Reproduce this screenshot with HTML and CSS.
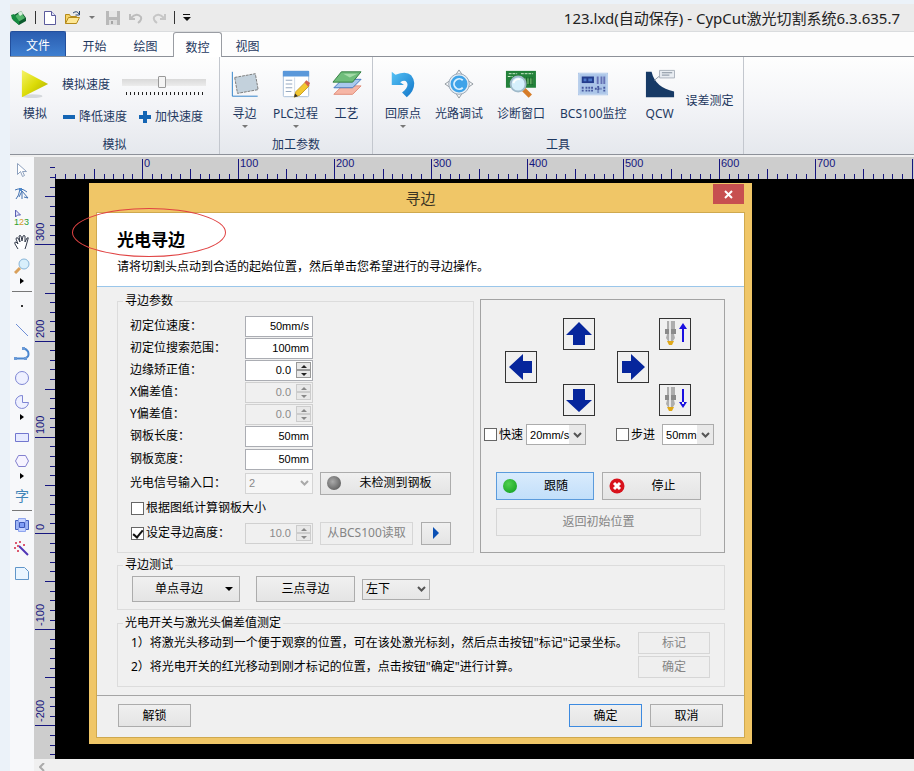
FILE: index.html
```html
<!DOCTYPE html>
<html lang="zh-CN">
<head>
    <meta charset="UTF-8">
    <meta name="viewport" content="width=device-width, initial-scale=1.0">
    <title>CypCut激光切割系统</title>
    <link rel="stylesheet" href="styles.css">
</head>
<body>
    <header class="titlebar">
        <div class="quick">
            <svg width="18" height="18" viewBox="0 0 18 18"><path d="M4 6l7-4 5 7v3l-7 4-6-5z" fill="#0c5a2c"/><path d="M5 7l6-4 4 6-7 4z" fill="#52b56a"/><path d="M1 6l3-1 5 7v4l-7-6z" fill="#168a3e"/><path d="M8 4l3-2 2 3-3 2z" fill="#d8efdc"/></svg>
            <span class="bar"></span>
            <button class="quick-btn" aria-label="新建"><svg width="14" height="16" viewBox="0 0 14 16"><path d="M1.500 1.500h7l4 4v9h-11z" fill="#fff" stroke="#5a5a9c"/><path d="M8.500 1.500v4h4" fill="#dfe3f5" stroke="#5a5a9c"/></svg></button>
            <button class="quick-btn" aria-label="打开"><svg width="18" height="16" viewBox="0 0 18 16"><path d="M1.500 13.500v-9h4l1 2h6v3" fill="#f6d467" stroke="#b58a1a"/><path d="M1.500 13.500l3-6h11l-3 6z" fill="#fde795" stroke="#b58a1a"/><path d="M9 3q4-3 6 1M15.500 1v4h-4" fill="none" stroke="#26456f"/></svg></button>
            <span class="caret gray"></span>
            <button class="quick-btn save" aria-label="保存"><svg width="16" height="16" viewBox="0 0 16 16"><path d="M1 1h14v14h-14z" fill="#b9b9b9"/><path d="M4 1h8v6h-8z" fill="#e6e6e6"/><path d="M4 10h8v5h-8z" fill="#dcdcdc"/><path d="M6 11h2v3h-2z" fill="#a5a5a5"/></svg></button>
            <button class="quick-btn" aria-label="撤销"><svg width="16" height="14" viewBox="0 0 16 14"><path d="M2 3v5h5M3 7q6-6 10-1 1 3-3 6" fill="none" stroke="#bdbdbd" stroke-width="2"/></svg></button>
            <button class="quick-btn" aria-label="重做"><svg width="16" height="14" viewBox="0 0 16 14"><path d="M14 3v5h-5M13 7q-6-6-10-1-1 3 3 6" fill="none" stroke="#c6c6c6" stroke-width="2"/></svg></button>
            <span class="bar"></span>
            <svg width="10" height="10" viewBox="0 0 10 10"><path d="M1 1.500h7" stroke="#111"/><path d="M1 4h8l-4 4z" fill="#111"/></svg>
        </div>
        <h1>123.lxd(自动保存) - CypCut激光切割系统6.3.635.7</h1>
    </header>

    <nav class="tabs">
        <a href="#" class="tab file">文件</a>
        <a href="#" class="tab">开始</a>
        <a href="#" class="tab">绘图</a>
        <a href="#" class="tab active">数控</a>
        <a href="#" class="tab">视图</a>
    </nav>

    <div class="ribbon">
        <section class="group sim">
            <div class="tools">
                <button class="tool play">
                    <svg viewBox="0 0 32 32"><defs><linearGradient id="playFill" x1="0" y1="0" x2="1" y2="1"><stop offset="0" stop-color="#f6f36a"/><stop offset=".5" stop-color="#dcdc08"/><stop offset="1" stop-color="#a8a800"/></linearGradient></defs><ellipse cx="13" cy="29" rx="11" ry="2" fill="#d5d8dc"/><path d="M2 1l28 15-28 14z" fill="url(#playFill)"/></svg>
                    <span>模拟</span>
                </button>
                <div class="speed">
                    <label class="speed-label" for="speed">模拟速度</label>
                    <div class="slider">
                        <input type="range" id="speed" min="0" max="100" value="47">
                        <div class="ticks"></div>
                    </div>
                    <button class="step"><svg width="14" height="14" viewBox="0 0 14 14"><path d="M1 5h12v4h-12z" fill="#1465b4"/></svg>降低速度</button>
                    <button class="step"><svg width="14" height="14" viewBox="0 0 14 14"><path d="M5 1h4v4h4v4h-4v4h-4v-4h-4v-4h4z" fill="#1465b4"/></svg>加快速度</button>
                </div>
            </div>
            <h2>模拟</h2>
        </section>
        <section class="group params">
            <div class="tools">
                <button class="tool">
                    <svg viewBox="0 0 32 32"><path d="M2.500 3v26h27" fill="none" stroke="#2a7ec8"/><path d="M5 9l22-4 3 17-22 4z" fill="#c3d1dc" stroke="#777" stroke-dasharray="3 1"/></svg>
                    <span>寻边</span><i class="caret gray"></i>
                </button>
                <button class="tool">
                    <svg viewBox="0 0 32 32"><rect x="2.500" y="2.500" width="27" height="27" rx="1" fill="#fff" stroke="#a6bdd8"/><path d="M2 2h28v6h-28z" fill="#5a98da"/><path d="M5 12h7M5 16h7M5 20h7M5 24h6" stroke="#8fa3bd"/><path d="M14.500 9v20" stroke="#cfdae8"/><path d="M14 30l2-6 10-10 4 4-10 10z" fill="#f2c830" stroke="#c79a20"/><path d="M25 14l2-2 4 3-2 4z" fill="#d2614d"/><path d="M14 30l1-4 3 3z" fill="#333"/></svg>
                    <span>PLC过程</span><i class="caret gray"></i>
                </button>
                <button class="tool">
                    <svg viewBox="0 0 32 32"><path d="M11 18h20l-9 9h-20z" fill="#f6b6a6" stroke="#e08a76"/><path d="M11 11h20l-9 9h-20z" fill="#a9c9ee" stroke="#3f74bd"/><path d="M10 3h21l-9 11h-21z" fill="#6fbd7b" stroke="#2f7c3d"/><path d="M12 5h15l-8 4z" fill="#a5dba9"/></svg>
                    <span>工艺</span>
                </button>
            </div>
            <h2>加工参数</h2>
        </section>
        <section class="group utils">
            <div class="tools">
                <button class="tool">
                    <svg viewBox="0 0 32 32"><defs><linearGradient id="backFill" x1="0" y1="0" x2="1" y2="1"><stop offset="0" stop-color="#56c2f5"/><stop offset="1" stop-color="#1276c9"/></linearGradient></defs><path d="M4 3l4 3q18-7 20 9 0 9-8 15l-5-5q8-6 5-11-2-3-7 0l4 3h-13z" fill="url(#backFill)"/></svg>
                    <span>回原点</span><i class="caret gray"></i>
                </button>
                <button class="tool">
                    <svg viewBox="0 0 32 32"><path d="M16 1l4 6 5 5 6 4-6 4-5 5-4 6-4-6-5-5-6-4 6-4 5-5z" fill="#f5f6f8" stroke="#8f979f"/><circle cx="16" cy="16" r="11" fill="#e5edf4" stroke="#9aa8b5"/><circle cx="16" cy="16" r="9" fill="#3fa3e8"/><path d="M20 12a5.500 5.500 0 1 0 0 8" fill="none" stroke="#d8f0ff" stroke-width="2"/></svg>
                    <span>光路调试</span>
                </button>
                <button class="tool">
                    <svg viewBox="0 0 34 32"><path d="M1 2h32v18h-32z" fill="#23813a"/><path d="M4 5h9M17 5h13M3 8h5" stroke="#d9f2d5" stroke-dasharray="3 1"/><path d="M18 10h12v6h-12z" fill="#5da95f"/><path d="M20 9v8M23 9v8M26 9v8M29 9v8" stroke="#185e29"/><path d="M20 22l7 7" stroke="#d67c28" stroke-width="5"/><circle cx="14" cy="16" r="8" fill="#d5effc" stroke="#9fb9c9" stroke-width="2"/><path d="M9 15q2-5 7-4" fill="none" stroke="#fff" stroke-width="2"/></svg>
                    <span>诊断窗口</span>
                </button>
                <button class="tool">
                    <svg viewBox="0 0 32 32"><path d="M0 4h32v24h-32z" fill="#abc5e8"/><path d="M1 5h30v22h-30z" fill="none" stroke="#c9daf0"/><path d="M4 8h13v7h-13z" fill="#233c8c"/><path d="M6 10h3v3h-3zM11 10h4v3h-4z" fill="#4d78c8"/><path d="M21 8v8M25 8v8M28 8v8" stroke="#6672b5" stroke-width="2"/><path d="M5 19v5M9 19v5M12 19v5M15 19v5M18 21h7M21.500 18v7M28 19v5" stroke="#46589e" stroke-width="2" stroke-dasharray="2 1"/></svg>
                    <span>BCS100监控</span>
                </button>
                <button class="tool">
                    <svg viewBox="0 0 32 32"><path d="M1 3h6q4 17 24 21v6h-30z" fill="#173a66"/><path d="M10 12l6-5" stroke="#8b96a5"/><path d="M15.500 1.500h16v8h-16z" fill="#e9edf2" stroke="#a9b0ba"/><path d="M18 4h11M18 6.500h8" stroke="#7c8796"/></svg>
                    <span>QCW</span>
                </button>
                <button class="tool plain">误差测定</button>
            </div>
            <h2>工具</h2>
        </section>
    </div>

    <main class="workspace">
        <aside class="toolbox">
            <button aria-label="选择"><svg viewBox="0 0 16 16"><path d="M3.500 1.500v11l3-3 2 5 2-1-2-4h4z" fill="#fff" stroke="#8ea1be"/></svg></button>
            <button aria-label="编辑节点"><svg viewBox="0 0 16 16"><path d="M1 4q6-3 12 2M6 3q-1 7-4 10M8 5v8M8 5l6 7-4-1M8 5l-3 6" fill="none" stroke="#4472b0"/><path d="M5 2h3v3h-3z" fill="#4d88cc"/></svg></button>
            <button aria-label="次序"><svg viewBox="0 0 16 16"><path d="M1.500 0v7l2-2h3z" fill="#e3e3fa" stroke="#5a5fb4"/><text x="0" y="15" font-size="9" class="order"><tspan fill="#2ca02c">1</tspan><tspan fill="#d99a2b">2</tspan><tspan fill="#2ca02c">3</tspan></text></svg></button>
            <button aria-label="移动视图"><svg viewBox="0 0 16 16"><path d="M4 15l-3-5q-1-2 1-2l2 2-2-5q0-2 2-1l2 4-1-6q1-1 2 0l1 5 1-5q1-1 2 0v6l2-4q2-1 1 1l-2 7-1 3" fill="#fff" stroke="#333a4a"/></svg></button>
            <button aria-label="缩放"><svg viewBox="0 0 16 16"><path d="M6 10l-5 5" stroke="#d9a05a" stroke-width="3"/><circle cx="10" cy="6" r="5" fill="#d8effb" stroke="#87b5d8"/></svg></button>
            <i class="more"></i>
            <hr>
            <button aria-label="点"><svg viewBox="0 0 16 16"><path d="M7 7h2v2h-2z" fill="#333"/></svg></button>
            <button aria-label="直线"><svg viewBox="0 0 16 16"><path d="M2 2l12 12" stroke="#6f8fd6"/></svg></button>
            <button aria-label="多段线"><svg viewBox="0 0 16 16"><path d="M2 12.500h8q6-1 4-7-2-3-5-3" fill="none" stroke="#4a86cf" stroke-width="2"/><path d="M0 11h3v3h-3zM10 11h3v3h-3zM8 1h3v3h-3z" fill="#6b9ad6"/></svg></button>
            <button aria-label="圆"><svg viewBox="0 0 16 16"><circle cx="8" cy="8" r="6.500" fill="#eef0ff" stroke="#7f86d4"/></svg></button>
            <button aria-label="圆弧"><svg viewBox="0 0 16 16"><path d="M8.500 1.500a6.500 6.500 0 1 0 6 7h-6z" fill="#eef0ff" stroke="#7f86d4"/></svg></button>
            <i class="more"></i>
            <button aria-label="矩形"><svg viewBox="0 0 16 16"><path d="M1.500 4.500h13v8h-13z" fill="#e6eaff" stroke="#7277cf"/></svg></button>
            <button aria-label="多边形"><svg viewBox="0 0 16 16"><path d="M4.500 2.500h7l3 5.500-3 5.500h-7l-3-5.500z" fill="#f6f3ff" stroke="#8380cf"/></svg></button>
            <i class="more"></i>
            <button class="glyph">字</button>
            <hr>
            <button aria-label="组合"><svg viewBox="0 0 16 16"><path d="M1.500 3.500h13v9h-13z" fill="#9db4f5" stroke="#4762bd"/><path d="M4.500 1.500h7v13h-7z" fill="#c4d2ff" stroke="#8fa5ee"/><path d="M5.500 5.500h5v5h-5z" fill="#7f9df5" stroke="#3c57b8"/></svg></button>
            <button aria-label="优化"><svg viewBox="0 0 16 16"><path d="M5 5l9 9" stroke="#4f35b5" stroke-width="2"/><path d="M1 1h2v2h-2zM5 0h2v2h-2zM9 3h2v2h-2zM0 6h2v2h-2zM3 9h2v2h-2zM3 4h2v2h-2z" fill="#dc5a70"/></svg></button>
            <button aria-label="倒角"><svg viewBox="0 0 16 16"><path d="M1.500 2.500h9l4 4v8h-13z" fill="#eaf5ff" stroke="#6196c9"/></svg></button>
        </aside>
        <svg class="ruler-v" id="rulerV" aria-hidden="true"></svg>
        <svg class="ruler-h" id="rulerH" aria-hidden="true"></svg>

        <div class="canvas">
            <div class="dialog" role="dialog" aria-label="寻边">
                <div class="dialog-title">
                    <span>寻边</span>
                    <button class="close" aria-label="关闭"><svg width="9" height="9" viewBox="0 0 9 9"><path d="M1 1l7 7M8 1l-7 7" stroke="#fff" stroke-width="2"/></svg></button>
                </div>
                <div class="dialog-inner">
                    <div class="intro">
                        <h3>光电寻边</h3>
                        <p>请将切割头点动到合适的起始位置，然后单击您希望进行的寻边操作。</p>
                    </div>

                    <div class="content">
                        <div class="columns">
                            <fieldset class="edge-params">
                                <legend>寻边参数</legend>
                                <div class="form">
                                    <label for="posSpeed">初定位速度：</label>
                                    <input type="text" id="posSpeed" class="box" value="50mm/s">
                                    <label for="searchRange">初定位搜索范围：</label>
                                    <input type="text" id="searchRange" class="box" value="100mm">
                                    <label for="edgeFix">边缘矫正值：</label>
                                    <span class="spin"><input type="text" id="edgeFix" value="0.0"><span class="arrows"><button aria-label="增加"></button><button aria-label="减少"></button></span></span>
                                    <label for="offX">X偏差值：</label>
                                    <span class="spin off"><input type="text" id="offX" value="0.0" disabled><span class="arrows"><button aria-label="增加" disabled></button><button aria-label="减少" disabled></button></span></span>
                                    <label for="offY">Y偏差值：</label>
                                    <span class="spin off"><input type="text" id="offY" value="0.0" disabled><span class="arrows"><button aria-label="增加" disabled></button><button aria-label="减少" disabled></button></span></span>
                                    <label for="plateL">钢板长度：</label>
                                    <input type="text" id="plateL" class="box" value="50mm">
                                    <label for="plateW">钢板宽度：</label>
                                    <input type="text" id="plateW" class="box" value="50mm">
                                    <label for="port">光电信号输入口：</label>
                                    <span class="combo off"><select id="port" disabled><option>2</option></select><svg width="9" height="6" viewBox="0 0 9 6"><path d="M1 1l3.500 3.500 3.500-3.500"/></svg></span>
                                    <button class="btn detect"><i class="led gray"></i><span>未检测到钢板</span></button>
                                    <label class="check wide"><input type="checkbox">根据图纸计算钢板大小</label>
                                    <label class="check"><input type="checkbox" id="useHeight" checked>设定寻边高度：</label>
                                    <span class="spin off"><input type="text" aria-label="寻边高度" value="10.0" disabled><span class="arrows"><button aria-label="增加" disabled></button><button aria-label="减少" disabled></button></span></span>
                                    <span class="read">
                                        <button class="btn" disabled>从BCS100读取</button>
                                        <button class="btn go" aria-label="执行"><svg width="8" height="12" viewBox="0 0 8 12"><path d="M1 0l6 6-6 6z" fill="#0b50b4"/></svg></button>
                                    </span>
                                </div>
                            </fieldset>

                            <div class="jog">
                                <div class="pad">
                                    <button class="pad-btn up" aria-label="上"><svg viewBox="0 0 30 30"><path d="M15 3l13 13h-7v10h-12v-10h-7z"/></svg></button>
                                    <button class="pad-btn left" aria-label="左"><svg viewBox="0 0 30 30"><path d="M3 15l14-13v7h9v12h-9v7z"/></svg></button>
                                    <button class="pad-btn right" aria-label="右"><svg viewBox="0 0 30 30"><path d="M27 15l-14-13v7h-9v12h9v7z"/></svg></button>
                                    <button class="pad-btn down" aria-label="下"><svg viewBox="0 0 30 30"><path d="M15 27l13-12h-7v-11h-12v11h-7z"/></svg></button>
                                    <button class="pad-btn head-up" aria-label="切割头上升"><svg viewBox="0 0 30 30"><path d="M7 2h8v8h-8z" class="metal"/><path d="M5 10h11v5h-11z" class="metal dark"/><path d="M7 15h7l1 4-2 3h-5l-2-3z" class="metal"/><path d="M9 2h2v20h-2z" class="shine"/><path d="M7 22h7l-2 4h-3z" class="tip"/><path d="M22 8h2v15h-2zM23 4l4 6h-8z" class="thin"/></svg></button>
                                    <button class="pad-btn head-down" aria-label="切割头下降"><svg viewBox="0 0 30 30"><path d="M7 2h8v8h-8z" class="metal"/><path d="M5 10h11v5h-11z" class="metal dark"/><path d="M7 15h7l1 4-2 3h-5l-2-3z" class="metal"/><path d="M9 2h2v20h-2z" class="shine"/><path d="M7 22h7l-2 4h-3z" class="tip"/><path d="M22 4h2v15h-2zM23 23l4-6h-8z" class="thin"/></svg></button>
                                </div>
                                <div class="jog-opts">
                                    <label class="check"><input type="checkbox">快速</label>
                                    <span class="combo fast"><select aria-label="快速速度"><option>20mm/s</option></select><svg width="9" height="6" viewBox="0 0 9 6"><path d="M1 1l3.500 3.500 3.500-3.500"/></svg></span>
                                    <label class="check step-check"><input type="checkbox">步进</label>
                                    <span class="combo"><select aria-label="步进距离"><option>50mm</option></select><svg width="9" height="6" viewBox="0 0 9 6"><path d="M1 1l3.500 3.500 3.500-3.500"/></svg></span>
                                </div>
                                <div class="jog-actions">
                                    <button class="btn follow"><i class="led green"></i><span>跟随</span></button>
                                    <button class="btn"><svg width="16" height="16" viewBox="0 0 16 16"><circle cx="8" cy="8" r="7.500" fill="#d8121c"/><path d="M5 5l6 6M11 5l-6 6" stroke="#fff" stroke-width="3"/></svg><span>停止</span></button>
                                    <button class="btn home" disabled>返回初始位置</button>
                                </div>
                            </div>
                        </div>

                        <fieldset class="edge-test">
                            <legend>寻边测试</legend>
                            <div class="test-row">
                                <button class="btn single"><span>单点寻边</span><i class="caret"></i></button>
                                <button class="btn triple">三点寻边</button>
                                <span class="combo corner"><select aria-label="角位置"><option>左下</option></select><svg width="9" height="6" viewBox="0 0 9 6"><path d="M1 1l3.500 3.500 3.500-3.500"/></svg></span>
                            </div>
                        </fieldset>

                        <fieldset class="deviation">
                            <legend>光电开关与激光头偏差值测定</legend>
                            <div class="dev-row">
                                <span>1）将激光头移动到一个便于观察的位置，可在该处激光标刻，然后点击按钮"标记"记录坐标。</span>
                                <button class="btn" disabled>标记</button>
                            </div>
                            <div class="dev-row">
                                <span>2）将光电开关的红光移动到刚才标记的位置，点击按钮"确定"进行计算。</span>
                                <button class="btn" disabled>确定</button>
                            </div>
                        </fieldset>
                    </div>

                    <div class="dialog-footer">
                        <button class="btn unlock">解锁</button>
                        <button class="btn ok">确定</button>
                        <button class="btn">取消</button>
                    </div>
                </div>
                <div class="mark"></div>
            </div>
        </div>
        <div class="scroll"><svg width="6" height="8" viewBox="0 0 6 8"><path d="M5 0l-4 4 4 4" fill="none" stroke="#aaa" stroke-width="2"/></svg></div>
    </main>

    <script>
        // 10 mm on the rulers takes this many pixels
        const STEP = 9.62;

        function tickLength(i) {
            if (i % 10 === 0) return 20;
            return i % 5 === 0 ? 10 : 5;
        }

        function drawRuler(id, zero, vertical) {
            const ruler = document.getElementById(id);
            const box = ruler.getBoundingClientRect();
            const size = vertical ? box.height : box.width;
            const dir = vertical ? -1 : 1;
            let out = '';

            for (let i = -200; i <= 300; i++) {
                const p = Math.round(zero + dir * i * STEP);
                // the vertical ruler starts below the corner
                if (p < (vertical ? 10 : 0) || p >= size) continue;

                const len = tickLength(i);
                const label = i % 10 === 0 ? i * 10 : '';
                if (vertical) {
                    out += `<rect x="${21 - len}" y="${p}" width="${len}" height="1"/>`;
                    if (label !== '') out += `<text transform="translate(10 ${p - 3}) rotate(-90)">${label}</text>`;
                } else {
                    out += `<rect x="${p}" y="${22 - len}" width="1" height="${len}"/>`;
                    if (label !== '' && p + 22 < size) out += `<text x="${p + 2}" y="10">${label}</text>`;
                }
            }
            ruler.innerHTML = out;
        }

        function drawRulers() {
            drawRuler('rulerH', 87, false);
            drawRuler('rulerV', 376, true);
        }

        drawRulers();
        window.addEventListener('resize', drawRulers);
    </script>
</body>
</html>
```

FILE: styles.css
```css
:root {
    --ribbon-text: #1e3860;
    --line: #8d9199;
    --face: #f0f0f0;
    --gold: #f0c667;
    --ruler: #16167e;
    --cjk: "Noto Sans CJK SC", sans-serif;
}

* {
    box-sizing: border-box;
}

body {
    margin: 0;
    padding: 4px 0 0 10px;
    height: 100vh;
    display: flex;
    flex-direction: column;
    background: #ebf2f9;
    font-family: "Noto Sans", var(--cjk);
    font-size: 12px;
    line-height: 16px;
    color: #000;
    overflow: hidden;
}

h1, h2, h3, p {
    margin: 0;
    font-weight: normal;
}

button, input, select {
    font: inherit;
    color: inherit;
    margin: 0;
    padding: 0;
}

button {
    border: none;
    background: none;
}

svg {
    display: block;
    flex: none;
}

/* title bar */
.titlebar {
    display: flex;
    align-items: center;
    justify-content: space-between;
    height: 27px;
    padding-right: 14px;
    background: #ebebeb;
}

.titlebar h1 {
    font-size: 15px;
    line-height: 20px;
    color: #222;
}

.quick {
    display: flex;
    align-items: center;
    gap: 7px;
}

.quick .bar {
    width: 1px;
    height: 13px;
    background: #333;
}

.caret {
    width: 0;
    height: 0;
    border: 4px solid transparent;
    border-top-color: #000;
    border-bottom: none;
}

.caret.gray {
    border-width: 3px;
    border-bottom: none;
    border-top-color: #777;
}

.quick .caret {
    margin-right: 3px;
}

/* tabs */
.tabs {
    display: flex;
    align-items: flex-end;
    height: 26px;
    background: #fdfdfd;
    border-top: 1px solid #dadcde;
    border-bottom: 1px solid var(--line);
}

.tab {
    width: 51px;
    height: 24px;
    line-height: 30px;
    text-align: center;
    text-decoration: none;
    color: var(--ribbon-text);
}

.tab.file {
    width: 56px;
    height: 25px;
    margin-right: 3px;
    line-height: 28px;
    border: 1px solid #234f9c;
    border-bottom: none;
    border-radius: 2px 2px 0 0;
    background: linear-gradient(#2a5db0, #3f7fd0);
    color: #fff;
}

.tab.active {
    width: 49px;
    height: 25px;
    margin: 0 0 -1px 2px;
    background: #fff;
    border: 1px solid #9a9da3;
    border-bottom: none;
    border-radius: 3px 3px 0 0;
}

/* ribbon */
.ribbon {
    display: flex;
    height: 98px;
    background: linear-gradient(#fefefe, #f3f4f7 50%, #e5e8ed);
    border-bottom: 1px solid var(--line);
    color: var(--ribbon-text);
}

.group {
    display: flex;
    flex-direction: column;
    justify-content: space-between;
    padding-top: 12px;
    border-right: 1px solid #c3c7ce;
    white-space: nowrap;
}

.group h2 {
    text-align: center;
    font-size: 12px;
    line-height: 18px;
}

.tools {
    display: flex;
    align-items: flex-start;
}

.tool {
    display: flex;
    flex-direction: column;
    align-items: center;
    min-width: 50px;
}

.tool svg {
    height: 30px;
}

.tool span {
    margin-top: 4px;
    line-height: 22px;
}

.tool.plain {
    align-self: center;
    padding-top: 4px;
}

.sim {
    width: 210px;
}

.speed {
    display: grid;
    grid-template-columns: 60px 16px 74px;
    grid-template-rows: 32px 32px;
    align-items: center;
    padding-left: 2px;
}

.slider {
    grid-column: 2 / 4;
    justify-self: start;
    width: 84px;
}

.slider input {
    appearance: none;
    display: block;
    width: 100%;
    height: 14px;
    background: linear-gradient(#d9d9d9, #ececec) center / 100% 7px no-repeat;
}

.slider input::-webkit-slider-thumb {
    appearance: none;
    width: 8px;
    height: 12px;
    background: #f4f4f4;
    border: 1px solid #999;
    border-radius: 1px;
}

.ticks {
    height: 3px;
    margin: 3px 3px 0 4px;
    background: repeating-linear-gradient(90deg, #222 0 1px, transparent 1px 4px);
}

.step {
    display: flex;
    align-items: center;
    gap: 3px;
}

.step:nth-of-type(1) {
    grid-column: 1 / 3;
}

.params {
    width: 153px;
}

.params .tool {
    min-width: 49px;
}

.params .tool:nth-child(2) {
    min-width: 53px;
}

.utils {
    width: 371px;
}

.utils .tool {
    padding: 0 7px;
}

.utils .tool:first-child {
    padding: 0 6px;
    margin-left: 5px;
}

.utils .tool:nth-child(4) {
    padding: 0 8px;
}

.utils .tool.plain {
    padding: 4px 0 0;
}

/* drawing area */
.workspace {
    flex: 1;
    min-height: 0;
    display: grid;
    grid-template-columns: 24px 21px 1fr;
    grid-template-rows: 22px 1fr 12px;
    padding-top: 2px;
    background: var(--face);
}

.toolbox {
    grid-row: 1 / 4;
    display: flex;
    flex-direction: column;
    background: #f7f8fa;
    padding-top: 1px;
}

.toolbox button {
    display: flex;
    align-items: center;
    justify-content: center;
    height: 24px;
}

.toolbox svg {
    width: 16px;
    height: 16px;
}

.toolbox hr {
    width: 20px;
    height: 1px;
    margin: 2px auto;
    border: none;
    background: #777;
}

.toolbox .more {
    align-self: center;
    margin-bottom: 5px;
    border: 3px solid transparent;
    border-left: 4px solid #000;
    border-right: none;
}

.toolbox .glyph {
    font-size: 14px;
    color: #4285b8;
}

.order {
    font-family: "Liberation Sans", sans-serif;
}

.ruler-v,
.ruler-h {
    width: 100%;
    height: 100%;
    overflow: hidden;
    background: #cdcdcd;
    fill: var(--ruler);
    font: 11px "Liberation Sans", sans-serif;
}

.ruler-v {
    grid-row: 1 / 3;
    grid-column: 2;
}

.canvas {
    grid-column: 3;
    background: #000;
}

.scroll {
    grid-column: 2 / 4;
    padding: 4px 5px 0;
}

/* dialog */
.dialog {
    position: relative;
    margin: 4px 162px 0 34px;
    padding: 0 8px 7px;
    background: var(--gold);
}

.dialog-title {
    display: flex;
    justify-content: center;
    height: 30px;
    line-height: 30px;
    font-size: 15px;
    color: #3c3524;
}

.dialog-title span {
    flex: 1;
    text-align: center;
}

.dialog-title .close {
    display: flex;
    align-items: center;
    justify-content: center;
    width: 31px;
    height: 20px;
    margin: 1px 0 0 -31px;
    background: #c75050;
}

.dialog-inner {
    background: var(--face);
    outline: 1px solid #cfa94f;
}

.mark {
    position: absolute;
    left: -17px;
    top: 25px;
    width: 154px;
    height: 49px;
    border: 1px solid #e04343;
    border-radius: 50%;
    pointer-events: none;
}

.intro {
    height: 74px;
    padding: 16px 20px 0;
    background: #fff;
    border-bottom: 1px solid #9ac6ea;
}

.intro h3 {
    font-size: 17px;
    line-height: 22px;
    font-weight: bold;
}

.intro p {
    margin-top: 8px;
}

.content {
    padding: 6px 19px 8px 20px;
}

.columns {
    display: grid;
    grid-template-columns: 1fr 245px;
    gap: 6px;
}

fieldset {
    min-width: 0;
    margin: 0;
    border: 1px solid #dcdcdc;
}

legend {
    padding: 0 2px;
    line-height: 16px;
}

.edge-params {
    padding: 6px 12px 7px 5px;
}

.form {
    display: grid;
    grid-template-columns: 115px 68px 1fr;
    grid-template-rows: repeat(6, 22px) repeat(2, 24px) 26px 24px;
    align-items: center;
    padding-left: 7px;
}

.form > label {
    grid-column: 1;
}

.form > .wide {
    grid-column: 1 / 3;
}

.box,
.spin input {
    width: 68px;
    height: 21px;
    padding: 0 3px;
    border: 1px solid #abadb3;
    background: #fff;
    font-family: "Liberation Sans", sans-serif;
    font-size: 11px;
    text-align: right;
}

.spin {
    display: grid;
}

.spin > * {
    grid-area: 1 / 1;
}

.spin input {
    padding-right: 21px;
}

.arrows {
    justify-self: end;
    align-self: center;
    display: grid;
    width: 15px;
    margin-right: 2px;
}

.arrows button {
    display: flex;
    align-items: center;
    justify-content: center;
    height: 8px;
    border: 1px solid #999;
    background: #e8e8e8;
}

.arrows button::before {
    content: "";
    border: 3px solid transparent;
    border-top: none;
    border-bottom-color: #222;
}

.arrows button:last-child::before {
    transform: rotate(180deg);
}

.off input {
    background: var(--face);
    border-color: #d0d0d0;
    color: #8a8a8a;
}

.off .arrows button {
    border-color: #ccc;
}

.off .arrows button::before {
    border-bottom-color: #888;
}

.combo {
    display: grid;
    align-items: center;
}

.combo > * {
    grid-area: 1 / 1;
}

.combo select {
    appearance: none;
    width: 100%;
    height: 21px;
    padding: 0 3px;
    border: 1px solid #acacac;
    border-radius: 0;
    background: linear-gradient(90deg, transparent calc(100% - 16px), #e9e9e9 0) #fff;
    font-family: "Liberation Sans", var(--cjk);
    font-size: 11px;
}

.combo svg {
    justify-self: end;
    margin-right: 4px;
    fill: none;
    stroke: #555;
    stroke-width: 2;
    pointer-events: none;
}

.combo.off select {
    border-color: #d4d4d4;
    background: #f6f6f6;
    color: #8a8a8a;
    opacity: 1;
}

.combo.off svg {
    stroke: #aaa;
}

.combo.corner select {
    font-size: 12px;
    background: linear-gradient(#f0f0f0, #e6e6e6);
}

.check {
    display: flex;
    align-items: center;
    gap: 2px;
    white-space: nowrap;
}

.check input {
    appearance: none;
    display: grid;
    place-items: center;
    flex: none;
    width: 13px;
    height: 13px;
    border: 1px solid #666;
    background: #fff;
}

.check input:checked::before {
    content: "";
    width: 4px;
    height: 8px;
    border: solid #111;
    border-width: 0 2px 2px 0;
    transform: rotate(40deg);
}

.form .check {
    padding-left: 1px;
}

.btn {
    display: flex;
    align-items: center;
    justify-content: center;
    height: 23px;
    border: 1px solid #acacac;
    background: linear-gradient(#f0f0f0, #e4e4e4);
    white-space: nowrap;
}

.btn:disabled {
    border-color: #d6d6d6;
    background: #efefef;
    color: #858585;
}

.btn span {
    flex: 1;
    text-align: center;
}

.led {
    width: 14px;
    height: 14px;
    border-radius: 50%;
}

.led.gray {
    background: radial-gradient(circle at 40% 40%, #aaa, #4c4c4c);
}

.led.green {
    background: radial-gradient(circle at 40% 35%, #4fd04f, #0e9c1d);
}

.detect,
.read {
    margin-left: 7px;
    width: 131px;
}

.detect {
    padding: 0 8px 0 6px;
}

.detect span {
    padding-left: 8px;
}

.read {
    display: grid;
    grid-template-columns: 93px 30px;
    justify-content: space-between;
}

/* jog panel */
.jog {
    margin-top: 6px;
    padding-top: 18px;
    border: 1px solid #a3a3a3;
}

.pad {
    display: grid;
    grid-template-columns: 58px 54px 42px 32px;
    grid-template-rows: repeat(3, 33px);
    padding-left: 24px;
}

.pad-btn {
    width: 32px;
    height: 32px;
    border: 1px solid #333;
}

.pad-btn svg {
    width: 30px;
    height: 30px;
    fill: #06269c;
}

.up { grid-area: 1 / 2; }
.left { grid-area: 2 / 1; }
.right { grid-area: 2 / 3; }
.down { grid-area: 3 / 2; }
.head-up { grid-area: 1 / 4; }
.head-down { grid-area: 3 / 4; }

.pad-btn .metal {
    fill: #adadad;
}

.pad-btn .dark {
    fill: #8a8a8a;
}

.pad-btn .shine {
    fill: #e6e6e6;
}

.pad-btn .tip {
    fill: #e0a818;
}

.pad-btn .thin {
    fill: #1a10e0;
}

.jog-opts {
    display: flex;
    align-items: center;
    padding: 7px 0 0 3px;
}

.jog-opts .combo {
    width: 52px;
    margin-left: 7px;
}

.jog-opts .combo.fast {
    width: 60px;
    margin-left: 3px;
}

.step-check {
    margin-left: 30px;
}

.jog-actions {
    display: grid;
    grid-template-columns: 98px 99px;
    gap: 8px;
    padding: 27px 0 0 15px;
}

.jog-actions .btn {
    height: 28px;
    padding: 0 6px;
}

.jog-actions span {
    padding-left: 8px;
}

.jog-actions .home {
    grid-column: 1 / 3;
}

.btn.follow {
    border-color: #5b9bdc;
    background: linear-gradient(#d9ebfc, #c2dffa);
}

/* test and deviation */
.edge-test {
    margin-top: 4px;
    padding: 3px 14px 7px 5px;
}

.test-row {
    display: flex;
    align-items: center;
    padding-left: 9px;
}

.test-row .btn {
    height: 26px;
}

.single {
    width: 108px;
    padding-right: 6px;
}

.triple {
    width: 99px;
    margin: 0 7px 0 16px;
}

.corner {
    width: 68px;
}

.deviation {
    margin-top: 5px;
    padding: 0 14px 7px 5px;
}

.dev-row {
    display: flex;
    align-items: center;
    justify-content: space-between;
    height: 24px;
    padding-left: 8px;
    white-space: nowrap;
}

.dev-row .btn {
    width: 72px;
    height: 22px;
}

.dialog-footer {
    display: flex;
    gap: 8px;
    padding: 8px 21px 10px;
    border-top: 1px solid #a5a5a5;
}

.dialog-footer .btn {
    width: 73px;
}

.dialog-footer .unlock {
    margin-right: auto;
}

.btn.ok {
    border-color: #3c8ae0;
}
```
